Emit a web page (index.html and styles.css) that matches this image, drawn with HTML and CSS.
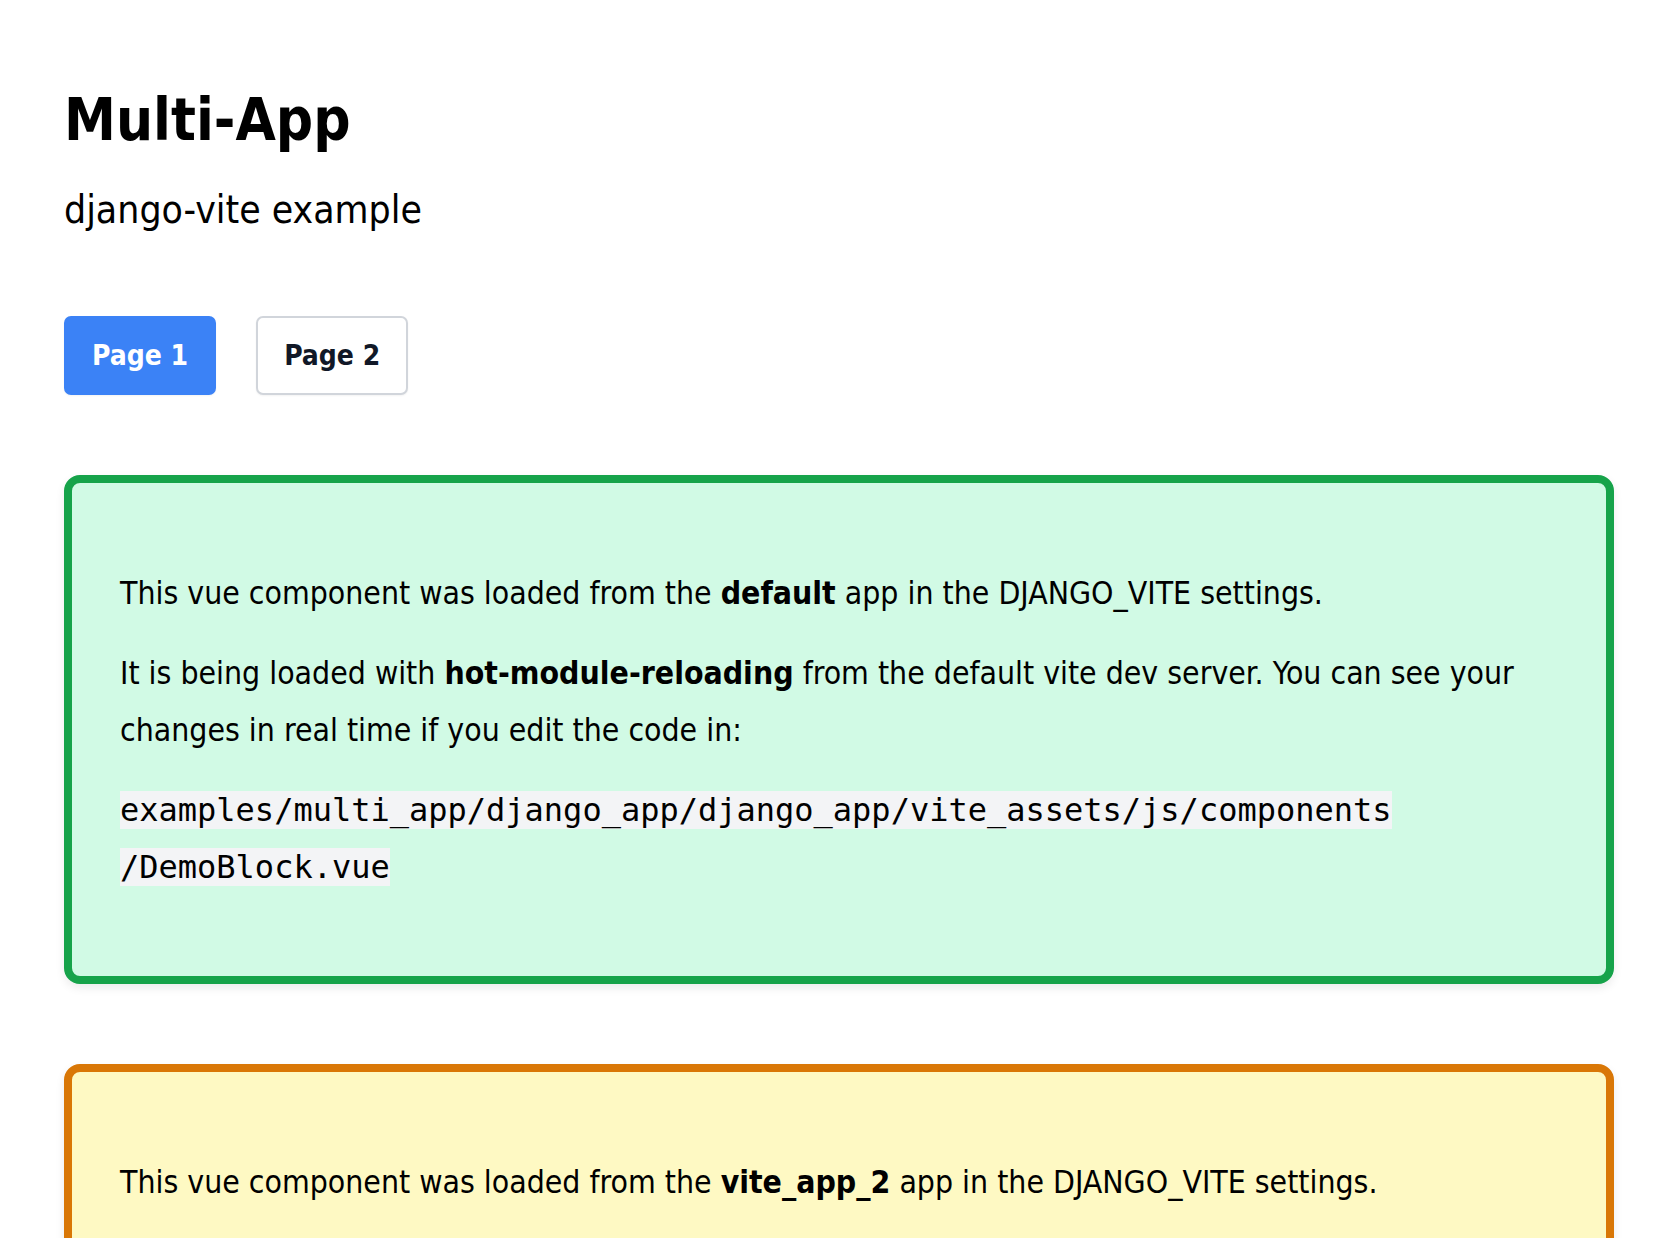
FILE: index.html
```html
<!DOCTYPE html>
<html lang="en">
<head>
<meta charset="utf-8">
<title>Multi-App</title>
<link rel="stylesheet" href="styles.css">
</head>
<body>
<main class="page">
  <header class="intro">
    <h1 class="title">Multi-App</h1>
    <p class="subtitle">django-vite example</p>
  </header>

  <nav class="tabs">
    <a class="tab tab-active" href="#">Page 1</a>
    <a class="tab" href="#">Page 2</a>
  </nav>

  <section class="demo demo-green">
    <p>This vue component was loaded from the <strong>default</strong> app in the DJANGO_VITE settings.</p>
    <p>It is being loaded with <strong>hot-module-reloading</strong> from the default vite dev server. You can see your changes in real time if you edit the code in:</p>
    <p><code>examples/multi_app/django_app/django_app/vite_assets/js/components<wbr>/DemoBlock.vue</code></p>
  </section>

  <section class="demo demo-amber">
    <p>This vue component was loaded from the <strong>vite_app_2</strong> app in the DJANGO_VITE settings.</p>
    <p>It is being loaded with <strong>hot-module-reloading</strong> from the vite_app_2 vite dev server. You can see your changes in real time if you edit the code in:</p>
    <p><code>examples/multi_app/vite_app_2/src/components<wbr>/DemoBlock.vue</code></p>
  </section>
</main>
</body>
</html>
```

FILE: styles.css
```css
html, body {
  margin: 0;
  padding: 0;
  background: #ffffff;
}

body {
  font-family: "DejaVu Sans Condensed", "DejaVu Sans", "Noto Sans", sans-serif;
  color: #000000;
}

.page {
  padding: 85px 64px 80px 64px;
}

.intro {
  display: flex;
  flex-direction: column;
}

.title {
  margin: 0;
  font-size: 58px;
  line-height: 70px;
  font-weight: 700;
}

.subtitle {
  margin: 32px 0 0 0;
  font-size: 38.8px;
  line-height: 46px;
}

.tabs {
  display: flex;
  gap: 40px;
  margin-top: 83px;
}

.tab {
  display: inline-flex;
  align-items: center;
  justify-content: center;
  height: 79px;
  box-sizing: border-box;
  padding: 0 26px;
  border: 2px solid #d1d5db;
  border-radius: 7px;
  background: #ffffff;
  color: #111827;
  font-size: 28px;
  font-weight: 700;
  text-decoration: none;
  box-shadow: 0 1px 2px rgba(0, 0, 0, 0.05);
}

.tab-active {
  background: #3b82f6;
  border-color: #3b82f6;
  color: #ffffff;
}

.demo {
  margin-top: 80px;
  padding: 59px 48px 57px 48px;
  border: 8px solid;
  border-radius: 16px;
  font-size: 31.7px;
  line-height: 57px;
  box-shadow: 0 4px 10px rgba(0, 0, 0, 0.08);
}

.demo + .demo {
  margin-top: 80px;
}

.demo p {
  margin: 23px 0;
}

.demo strong {
  font-weight: 700;
}

.demo-green {
  background: #d1fae5;
  border-color: #16a34a;
}

.demo-amber {
  background: #fef9c3;
  border-color: #d97706;
}

.demo code {
  font-family: "DejaVu Sans Mono", "Liberation Mono", monospace;
  font-size: 32px;
  background: #f3f4f6;
}
```
